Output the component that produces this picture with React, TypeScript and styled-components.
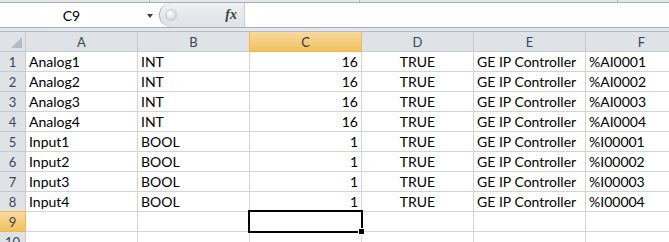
import React from 'react'
import styled, { createGlobalStyle } from 'styled-components'

interface Row {
    name: string,
    type: string,
    size: number,
    enabled: string,
    device: string,
    address: string,
}

const rows: Row[] = [
    { name: 'Analog1', type: 'INT', size: 16, enabled: 'TRUE', device: 'GE IP Controller', address: '%AI0001' },
    { name: 'Analog2', type: 'INT', size: 16, enabled: 'TRUE', device: 'GE IP Controller', address: '%AI0002' },
    { name: 'Analog3', type: 'INT', size: 16, enabled: 'TRUE', device: 'GE IP Controller', address: '%AI0003' },
    { name: 'Analog4', type: 'INT', size: 16, enabled: 'TRUE', device: 'GE IP Controller', address: '%AI0004' },
    { name: 'Input1', type: 'BOOL', size: 1, enabled: 'TRUE', device: 'GE IP Controller', address: '%I00001' },
    { name: 'Input2', type: 'BOOL', size: 1, enabled: 'TRUE', device: 'GE IP Controller', address: '%I00002' },
    { name: 'Input3', type: 'BOOL', size: 1, enabled: 'TRUE', device: 'GE IP Controller', address: '%I00003' },
    { name: 'Input4', type: 'BOOL', size: 1, enabled: 'TRUE', device: 'GE IP Controller', address: '%I00004' },
]

const columns = ['A', 'B', 'C', 'D', 'E', 'F']
const activeCol = 'C'
const activeRow = 9

const GlobalStyle = createGlobalStyle`
    body {
        margin: 0;
        background: #ffffff;
        overflow: hidden;
    }
`

const App: React.FC = () => {
    const blankRows = [9, 10]
    return (
        <>
            <GlobalStyle />
            <StyledWindow>
                <StyledTopStrip>
                    <StyledStripSegment $width={150} />
                    <StyledStripSegment $width={210} />
                    <StyledStripSegment $width={258} />
                </StyledTopStrip>
                <StyledFormulaBar>
                    <StyledNameBox>
                        <StyledNameText>C9</StyledNameText>
                        <StyledDropArrow />
                    </StyledNameBox>
                    <StyledPill>
                        <StyledGrip />
                        <StyledFx>fx</StyledFx>
                    </StyledPill>
                    <StyledFormulaInput />
                </StyledFormulaBar>
                <StyledGap />
                <StyledSheet>
                    <StyledCorner>
                        <StyledCornerTriangle />
                    </StyledCorner>
                    {columns.map((c) => (
                        <StyledColHeader key={c} $active={c === activeCol}>{c}</StyledColHeader>
                    ))}
                    {rows.map((r, i) => (
                        <React.Fragment key={r.name}>
                            <StyledRowHeader $active={false}>{i + 1}</StyledRowHeader>
                            <StyledCell>{r.name}</StyledCell>
                            <StyledCell>{r.type}</StyledCell>
                            <StyledCell $align="right">{r.size}</StyledCell>
                            <StyledCell $align="center">{r.enabled}</StyledCell>
                            <StyledCell>{r.device}</StyledCell>
                            <StyledCell>{r.address}</StyledCell>
                        </React.Fragment>
                    ))}
                    {blankRows.map((n) => (
                        <React.Fragment key={n}>
                            <StyledRowHeader $active={n === activeRow}>{n}</StyledRowHeader>
                            {columns.map((c) => (
                                <StyledCell key={c}>
                                    {n === activeRow && c === activeCol && (
                                        <StyledSelection>
                                            <StyledFillHandle />
                                        </StyledSelection>
                                    )}
                                </StyledCell>
                            ))}
                        </React.Fragment>
                    ))}
                </StyledSheet>
            </StyledWindow>
        </>
    )
}

const StyledWindow = styled.div`
    width: 669px;
    height: 242px;
    overflow: hidden;
    background: #ffffff;
    font-family: Lato, "Liberation Sans", sans-serif;
`

const StyledTopStrip = styled.div`
    display: flex;
    height: 2px;
    background: #e4e7eb;
    border-bottom: 1px solid #a9aeb4;
`

const StyledStripSegment = styled.div<{ $width: number }>`
    width: ${(props) => props.$width}px;
    height: 100%;
    border-right: 1px solid #b9bec4;
    box-sizing: border-box;
`

const StyledFormulaBar = styled.div`
    display: flex;
    height: 24px;
    background: #ffffff;
    border-bottom: 1px solid #a9aeb5;
`

const StyledNameBox = styled.div`
    position: relative;
    width: 159px;
    display: flex;
    align-items: center;
    justify-content: center;
`

const StyledNameText = styled.span`
    font-size: 14px;
    color: #000000;
    margin-right: 16px;
    margin-top: 1px;
`

const StyledDropArrow = styled.div`
    position: absolute;
    left: 147px;
    top: 11px;
    width: 0;
    height: 0;
    border-left: 3.5px solid transparent;
    border-right: 3.5px solid transparent;
    border-top: 4px solid #3c3c3c;
`

const StyledPill = styled.div`
    width: 86px;
    height: 100%;
    box-sizing: border-box;
    display: flex;
    align-items: center;
    justify-content: space-between;
    padding: 0 7px 0 5px;
    background: linear-gradient(#eef0f2, #dfe2e6);
    border-left: 1px solid #a9aeb5;
    border-right: 1px solid #c9cdd2;
    border-radius: 12px 0 0 12px;
`

const StyledGrip = styled.div`
    width: 10px;
    height: 10px;
    border-radius: 50%;
    background: radial-gradient(circle at 40% 35%, #ffffff, #c3c7cc);
    border: 1px solid #c7cbd0;
`

const StyledFx = styled.span`
    font-family: "Liberation Serif", serif;
    font-style: italic;
    font-weight: bold;
    font-size: 14px;
    color: #404040;
    margin-top: -1px;
`

const StyledFormulaInput = styled.div`
    flex: 1;
    background: #ffffff;
`

const StyledGap = styled.div`
    height: 3px;
    background: #e4e7eb;
    border-bottom: 1px solid #b6bcc4;
`

const StyledSheet = styled.div`
    display: grid;
    grid-template-columns: 26px repeat(6, 112px);
    grid-auto-rows: 20px;
`

const StyledCorner = styled.div`
    position: relative;
    background: #dfe3e8;
    border-right: 1px solid #c6cbd2;
    border-bottom: 1px solid #c6cbd2;
`

const StyledCornerTriangle = styled.div`
    position: absolute;
    right: 3px;
    bottom: 3px;
    width: 0;
    height: 0;
    border-left: 11px solid transparent;
    border-bottom: 11px solid #b6bcc4;
`

const StyledColHeader = styled.div<{ $active: boolean }>`
    display: flex;
    align-items: center;
    justify-content: center;
    font-size: 13px;
    color: ${(props) => props.$active ? '#2f3640' : '#3b4656'};
    background: ${(props) => props.$active ? 'linear-gradient(#f9d99f, #f1c15f)' : '#dfe3e8'};
    border-right: 1px solid ${(props) => props.$active ? '#f2b84a' : '#c6cbd2'};
    border-bottom: 1px solid ${(props) => props.$active ? '#f2b84a' : '#c6cbd2'};
    margin-left: ${(props) => props.$active ? '-1px' : '0'};
    border-left: ${(props) => props.$active ? '1px solid #f2b84a' : 'none'};
`

const StyledRowHeader = styled.div<{ $active: boolean }>`
    display: flex;
    align-items: center;
    justify-content: center;
    font-size: 13px;
    color: #3b4656;
    background: ${(props) => props.$active ? 'linear-gradient(#f9d99f, #f1c15f)' : '#dfe3e8'};
    border-right: 1px solid ${(props) => props.$active ? '#f2b84a' : '#c6cbd2'};
    border-bottom: 1px solid ${(props) => props.$active ? '#f2b84a' : '#c6cbd2'};
    margin-top: ${(props) => props.$active ? '-1px' : '0'};
    border-top: ${(props) => props.$active ? '1px solid #f2b84a' : 'none'};
`

const StyledCell = styled.div<{ $align?: 'left' | 'right' | 'center' }>`
    position: relative;
    display: flex;
    align-items: flex-end;
    justify-content: ${(props) => props.$align === 'right' ? 'flex-end' : props.$align === 'center' ? 'center' : 'flex-start'};
    padding: 0 3px 1px 3px;
    font-size: 14px;
    line-height: 17px;
    color: #000000;
    white-space: nowrap;
    border-right: 1px solid #d4d4d4;
    border-bottom: 1px solid #d4d4d4;
`

const StyledSelection = styled.div`
    position: absolute;
    left: -2px;
    top: -2px;
    right: -2px;
    bottom: -2px;
    border: 2px solid #000000;
    z-index: 1;
`

const StyledFillHandle = styled.div`
    position: absolute;
    right: -4px;
    bottom: -4px;
    width: 5px;
    height: 5px;
    background: #000000;
    border: 1px solid #ffffff;
`

export default App
